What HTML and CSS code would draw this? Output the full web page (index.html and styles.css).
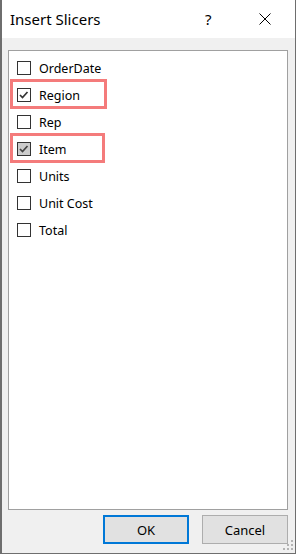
FILE: index.html
```html
<!DOCTYPE html>
<html lang="en">
<head>
    <meta charset="UTF-8">
    <meta name="viewport" content="width=device-width, initial-scale=1.0">
    <title>Insert Slicers</title>
    <link rel="stylesheet" href="styles.css">
</head>
<body>
    <div class="janela">
        <div class="barra-titulo">
            <span class="titulo">Insert Slicers</span>
            <span class="ajuda">?</span>
            <svg class="fechar" width="12" height="12" viewBox="0 0 12 12">
                <path d="M0.5 0.5 L11.5 11.5 M11.5 0.5 L0.5 11.5" stroke="#000" stroke-width="1" fill="none"/>
            </svg>
        </div>
        <div class="corpo">
            <div class="lista">
                <div class="item">
                    <span class="caixa"></span>
                    <span class="rotulo">OrderDate</span>
                </div>
                <div class="item marcado marcado-largo">
                    <span class="caixa">
                        <svg width="14" height="14" viewBox="0 0 14 14"><path d="M3 7 L5.5 9.5 L10.5 4" stroke="#333" stroke-width="1.7" fill="none"/></svg>
                    </span>
                    <span class="rotulo">Region</span>
                </div>
                <div class="item">
                    <span class="caixa"></span>
                    <span class="rotulo">Rep</span>
                </div>
                <div class="item marcado">
                    <span class="caixa cinza">
                        <svg width="14" height="14" viewBox="0 0 14 14"><path d="M3 7 L5.5 9.5 L10.5 4" stroke="#444" stroke-width="1.7" fill="none"/></svg>
                    </span>
                    <span class="rotulo">Item</span>
                </div>
                <div class="item">
                    <span class="caixa"></span>
                    <span class="rotulo">Units</span>
                </div>
                <div class="item">
                    <span class="caixa"></span>
                    <span class="rotulo">Unit Cost</span>
                </div>
                <div class="item">
                    <span class="caixa"></span>
                    <span class="rotulo">Total</span>
                </div>
            </div>
            <div class="botoes">
                <button class="botao botao-ok">OK</button>
                <button class="botao">Cancel</button>
            </div>
            <svg class="alca" width="12" height="12" viewBox="0 0 12 12">
                <rect x="8" y="0" width="2" height="2" fill="#b4b4b4"/>
                <rect x="4" y="4" width="2" height="2" fill="#b4b4b4"/>
                <rect x="8" y="4" width="2" height="2" fill="#b4b4b4"/>
                <rect x="0" y="8" width="2" height="2" fill="#b4b4b4"/>
                <rect x="4" y="8" width="2" height="2" fill="#b4b4b4"/>
                <rect x="8" y="8" width="2" height="2" fill="#b4b4b4"/>
            </svg>
        </div>
    </div>
</body>
</html>
```

FILE: styles.css
```css
body {
    margin: 0;
    font-family: "Noto Sans", "Open Sans", sans-serif;
    color: #000;
}
.janela {
    width: 296px;
    height: 554px;
    box-sizing: border-box;
    border-left: 2px solid #6e6e6e;
    border-right: 1px solid #6e6e6e;
    border-bottom: 1px solid #6e6e6e;
    display: flex;
    flex-direction: column;
}
.barra-titulo {
    height: 38px;
    background-color: #fff;
    display: flex;
    align-items: center;
    padding-left: 8px;
}
.titulo {
    font-size: 15px;
    flex: 1;
}
.ajuda {
    font-size: 15px;
    width: 12px;
    margin-right: 42px;
}
.fechar {
    margin-right: 24px;
}
.corpo {
    flex: 1;
    background-color: #f0f0f0;
    padding: 12px 7px 9px 6px;
    display: flex;
    flex-direction: column;
    position: relative;
}
.lista {
    height: 460px;
    box-sizing: border-box;
    background-color: #fff;
    border: 1px solid #a0a0a0;
    padding-top: 3px;
}
.item {
    height: 27px;
    display: flex;
    align-items: center;
    padding-left: 8px;
    position: relative;
}
.marcado::before {
    content: "";
    position: absolute;
    left: 1px;
    top: -2px;
    width: 95px;
    height: 30px;
    box-sizing: border-box;
    border: 3px solid #f47b7b;
}
.marcado-largo::before {
    width: 97px;
}
.caixa {
    width: 14px;
    height: 14px;
    box-sizing: border-box;
    border: 1px solid #333;
    background-color: #fff;
    display: flex;
    align-items: center;
    justify-content: center;
}
.caixa svg {
    flex: none;
}
.cinza {
    background-color: #cccccc;
}
.rotulo {
    font-size: 12.5px;
    margin-left: 8px;
    padding-top: 1px;
}
.botoes {
    margin-top: 5px;
    display: flex;
    justify-content: flex-end;
    gap: 13px;
}
.botao {
    width: 86px;
    height: 29px;
    font-family: "Noto Sans", "Open Sans", sans-serif;
    font-size: 13px;
    color: #000;
    background-color: #e1e1e1;
    border: 1px solid #adadad;
    padding: 0;
}
.botao-ok {
    border: 2px solid #0078d7;
}
.alca {
    position: absolute;
    right: 0;
    bottom: 1px;
}
```
